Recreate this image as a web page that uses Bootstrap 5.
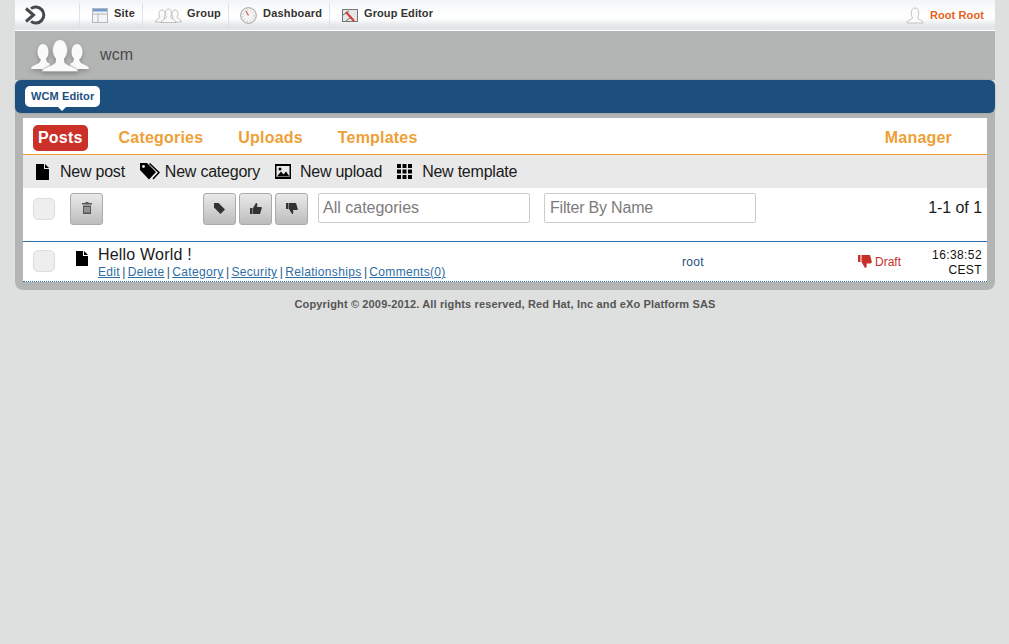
<!DOCTYPE html>
<html lang="en">
<head>
<meta charset="utf-8">
<title>WCM</title>
<link rel="stylesheet" href="https://cdn.jsdelivr.net/npm/bootstrap@5.3.0/dist/css/bootstrap.min.css">
<style>
html,body{height:100%}
body{background:#dee0df;font-family:"Liberation Sans",Arial,sans-serif;color:#000;overflow:hidden}
.shell{width:980px;margin-left:15px}
.topbar{height:31px;border-bottom:1px solid #fff;background:linear-gradient(#f2f5f7 0,#f6f8f9 5px,#fff 13px,#fff 18px,#e2e6e9 26px,#e1e5e8 30px)}
.logo-cell{width:64px;padding-left:9px;height:30px}
.tb-item{height:25px;margin-top:3px;border-left:1px solid #dfe2e4;font-size:11px;font-weight:700;color:#333;letter-spacing:.2px;white-space:nowrap}
.tb-item svg{flex:none}
.tb-label{position:relative;top:-2px}
.tb-user{color:#e2621b;font-size:11px;font-weight:700;margin-right:11px;letter-spacing:.1px}
.titlebar{height:49px;background:#b3b5b4}
.titlebar span{font-size:16px;color:#4a4a4a;margin-left:10px;letter-spacing:.1px;position:relative;top:-1px}
.groupicon{filter:drop-shadow(0 2px 2px rgba(0,0,0,.25))}
.frame{background:#b3b5b4;border-radius:6px 6px 8px 8px;padding-bottom:8px}
.bluebar{height:33px;background:#1c4f7e;border-radius:6px;padding:6px 0 0 10px;box-shadow:0 0 2px rgba(0,0,0,.25)}
.maintab{display:block;width:75px;position:relative;height:21px;line-height:21px;background:#fff;color:#1c4f7e;font-size:11px;font-weight:700;border-radius:5px;padding:0 6px;letter-spacing:.1px;white-space:nowrap}
.maintab::after{content:"";position:absolute;left:33px;bottom:-4px;border:4px solid transparent;border-bottom:0;border-top-color:#fff}
.inner{margin:5px 8px 0;background:#fff}
.tabsrow{height:37px;border-bottom:1px solid #ee9f35;padding:7px 0 0 10px}
.wtab{display:block;height:26px;line-height:25px;font-size:16px;font-weight:700;color:#ee9f35;text-decoration:none;padding:0 5px;letter-spacing:.2px;border-radius:5px}
.wtab.on{background:#cb3029;color:#fff;letter-spacing:.2px}
.actions{height:33px;background:#e9e9e9;padding-left:13px;font-size:16px;color:#1a1a1a;letter-spacing:-.23px}
.act{display:flex;align-items:center;white-space:nowrap}
.filters{height:54px;padding:5px 5px 0 10px;border-bottom:1px solid #2a6eb0}
.chk{width:22px;height:22px;background:#eee;border:1px solid #ddd;border-radius:5px;flex:none}
.gbtn{width:33px;height:32px;border:1px solid #aaa;border-radius:3px;background:linear-gradient(#e9e9e9,#bcbcbc);display:flex;align-items:center;justify-content:center;padding:0 0 2px;flex:none}
.fld{width:212px;height:30px;border:1px solid #ccc;border-radius:2px;font-size:16px;color:#7c7c7c;padding:0 4px;line-height:27px;white-space:nowrap;background:#fff}
.fld.byname{padding-left:5px;letter-spacing:-.2px}
.pager{font-size:16px;color:#1a1a1a;margin-top:3px;margin-left:auto;letter-spacing:-.05px}
.itemrow{height:40px;padding-left:10px;border-bottom:1px dotted #2a6eb0}
.ttl{font-size:16px;line-height:19px;color:#1a1a1a;letter-spacing:.2px;padding-top:3px}
.lnks{font-size:12px;line-height:15px;color:#1c4f7e;white-space:nowrap;margin-top:1px;word-spacing:-1px}
.lnks a{color:#2e6da4;letter-spacing:.33px}
.owner{width:176px;font-size:12px;color:#1c4f7e;letter-spacing:.3px;padding-top:11px;flex:none}
.state{width:72px;font-size:12px;color:#c9302c;padding-top:11px;flex:none}
.state svg{margin-right:3px;vertical-align:-2px}
.when{font-size:12px;line-height:15px;text-align:right;width:57px;padding:6px 5px 0 0;letter-spacing:.4px;flex:none;color:#111}
.copy{font-size:11px;font-weight:700;color:#555;text-align:center;margin-top:6px;letter-spacing:.145px}
</style>
</head>
<body>
<div class="shell">
  <div class="topbar d-flex">
    <div class="logo-cell d-flex align-items-center">
      <svg width="22" height="22" viewBox="0 0 22 22"><path d="M7 4.600A8 8 0 1 1 7 17.400" fill="none" stroke="#45494c" stroke-width="3"/><path d="M2 4.500L9.500 11 2 17.500" fill="none" stroke="#45494c" stroke-width="3"/></svg>
    </div>
    <div class="tb-item d-flex align-items-center" style="width:63px;padding-left:12px;gap:6px">
      <svg width="16" height="15" viewBox="0 0 16 15"><rect x=".5" y=".5" width="15" height="14" fill="#f2f4f5" stroke="#b5b8ba"/><rect x="1" y="1" width="14" height="2.500" fill="#6f9bd0"/><path d="M1 6h14M6 6v8" stroke="#b5b8ba" fill="none"/></svg><span class="tb-label">Site</span>
    </div>
    <div class="tb-item d-flex align-items-center" style="width:86px;padding-left:12px;gap:5px">
      <svg width="27" height="15" viewBox="0 0 27 15"><g fill="#fafafa" stroke="#aeb1b3" stroke-width=".8"><path d="M0.500 14c0-3 4-3 4.500-5-2-3-1-7 2-7s4 4 2 7l2 5z"/><path d="M26.500 14c0-3-4-3-4.500-5 2-3 1-7-2-7s-4 4-2 7l-2 5z"/><path d="M6 14.500c0-3 5-3 5.500-5.500-2-3-1-8 2-8s4 5 2 8c.5 2.500 5.500 2.500 5.500 5.500z"/></g></svg><span class="tb-label">Group</span>
    </div>
    <div class="tb-item d-flex align-items-center" style="width:101px;padding-left:11px;gap:6px">
      <svg width="17" height="17" viewBox="0 0 17 17"><circle cx="8.500" cy="8.500" r="7.800" fill="#f5f5f5" stroke="#9b9b9b"/><circle cx="8.500" cy="8.500" r="5.500" fill="none" stroke="#b9b9b9" stroke-dasharray="1 2"/><path d="M8.500 8.500L6 4" stroke="#d9534f" stroke-width="1.200"/></svg><span class="tb-label">Dashboard</span>
    </div>
    <div class="tb-item d-flex align-items-center" style="padding-left:12px;gap:6px;letter-spacing:.1px">
      <svg width="16" height="13" viewBox="0 0 16 13"><rect x=".5" y=".5" width="15" height="12" fill="#e4e6e7" stroke="#777"/><path d="M1 6l6-4M4 12l5-4" stroke="#666"/><path d="M4 3l8 9" stroke="#d43a32" stroke-width="2"/></svg><span class="tb-label">Group Editor</span>
    </div>
    <div class="ms-auto d-flex align-items-center tb-user" style="gap:6px">
      <svg width="18" height="17" viewBox="0 0 18 17"><path d="M1 16c0-3 5-3 5.500-5C4.500 8 4.500 1 9 1s4.500 7 2.500 10c.5 2 5.500 2 5.500 5z" fill="#fbfbfb" stroke="#b9bcbe" stroke-width=".9"/></svg><span>Root Root</span>
    </div>
  </div>
  <div class="titlebar d-flex align-items-center" style="padding-left:15px">
    <svg class="groupicon" width="60" height="36" viewBox="0 0 60 36"><g fill="#fafafa"><ellipse cx="13" cy="14" rx="5.500" ry="8"/><path d="M1 31c0-4 7-4 9-7l1-3h5l1 3 3 2-3 5z"/><ellipse cx="47" cy="14" rx="5.500" ry="8"/><path d="M59 31c0-4-7-4-9-7l-1-3h-5l-1 3-3 2 3 5z"/><g stroke="#b3b5b4" stroke-width="1"><ellipse cx="30" cy="12" rx="7.500" ry="10.500"/><path d="M12 33.500c0-5 10-5 13.500-9l1-4h7l1 4c3.500 4 13.500 4 13.500 9z"/></g><path d="M26 19h8v6h-8z"/></g></svg>
    <span>wcm</span>
  </div>
  <div class="frame">
    <div class="bluebar"><span class="maintab">WCM Editor</span></div>
    <div class="inner">
      <div class="tabsrow d-flex">
        <a class="wtab on" href="#">Posts</a>
        <a class="wtab" href="#" style="margin-left:26px">Categories</a>
        <a class="wtab" href="#" style="margin-left:25px">Uploads</a>
        <a class="wtab" href="#" style="margin-left:25px">Templates</a>
        <a class="wtab" href="#" style="margin-left:auto;margin-right:30px">Manager</a>
      </div>
      <div class="actions d-flex align-items-center">
        <div class="act" style="gap:11px"><svg width="13" height="16" viewBox="0 0 13 16"><path d="M0 0h8v5h5v11H0zM9 0l4 4H9z" fill="#000"/></svg>New post</div>
        <div class="act" style="gap:5px;margin-left:15px"><svg width="20" height="17" viewBox="0 0 20 17"><path d="M0 0h7l9 9-7 7.500L0 7z" fill="#000"/><path d="M9.500 0.500l9.500 9-6 6.500" fill="none" stroke="#000" stroke-width="1.500"/><circle cx="3.500" cy="3.500" r="1.400" fill="#e9e9e9"/></svg>New category</div>
        <div class="act" style="gap:9px;margin-left:15px"><svg width="16" height="15" viewBox="0 0 16 15"><path fill-rule="evenodd" d="M0 0h16v15H0zM1.500 2v11h13V2z" fill="#000"/><path d="M2 12.500l4-5 2.500 3 2.500-3 3.500 5z" fill="#000"/><circle cx="5" cy="5" r="1.500" fill="#000"/></svg>New upload</div>
        <div class="act" style="gap:10px;margin-left:15px"><svg width="15" height="15" viewBox="0 0 15 15" fill="#000"><rect width="4" height="4"/><rect x="5.500" width="4" height="4"/><rect x="11" width="4" height="4"/><rect y="5.500" width="4" height="4"/><rect x="5.500" y="5.500" width="4" height="4"/><rect x="11" y="5.500" width="4" height="4"/><rect y="11" width="4" height="4"/><rect x="5.500" y="11" width="4" height="4"/><rect x="11" y="11" width="4" height="4"/></svg>New template</div>
      </div>
      <div class="filters d-flex align-items-start">
        <div class="chk" style="margin-top:5px"></div>
        <button class="gbtn" type="button" style="margin-left:15px" aria-label="Delete"><svg width="10" height="12" viewBox="0 0 10 12" fill="#555"><path d="M3.500 0h3v1H10v1.500H0V1h3.500zM1 3.500h8V12H1zM2.500 5v5.500h1V5zM4.500 5v5.500h1V5zM6.500 5v5.500h1V5z" fill-rule="evenodd"/></svg></button>
        <button class="gbtn" type="button" style="margin-left:100px" aria-label="Category"><svg width="11" height="11" viewBox="0 0 11 11"><path d="M0 0h4.500L11 6.500 6.500 11 0 4.500z" fill="#333"/></svg></button>
        <button class="gbtn" type="button" style="margin-left:3px" aria-label="Publish"><svg width="12" height="11" viewBox="0 0 12 11" fill="#333"><path d="M0 5h2.500v6H0zM3 5l3-5c1.500 0 1.500 1.500 1 4h4c1 0 1 1 .5 2L10 11H3z"/></svg></button>
        <button class="gbtn" type="button" style="margin-left:3px" aria-label="Draft"><svg width="12" height="11" viewBox="0 0 12 11" fill="#333"><path d="M0 0h2.500v6H0zM3 6l3 5c1.500 0 1.500-1.500 1-4h4c1 0 1-1 .5-2L10 0H3z"/></svg></button>
        <div class="fld" style="margin-left:10px">All categories</div>
        <div class="fld byname" style="margin-left:14px">Filter By Name</div>
        <div class="pager">1-1 of 1</div>
      </div>
      <div class="itemrow d-flex">
        <div class="chk" style="margin-top:8px"></div>
        <svg width="12" height="15" viewBox="0 0 12 15" style="margin:9px 0 0 21px;flex:none"><path d="M0 0h7v5h5v10H0zM8 0l4 4H8z" fill="#000"/></svg>
        <div style="width:584px;margin-left:10px;flex:none">
          <div class="ttl">Hello World !</div>
          <div class="lnks"><a href="#">Edit</a> | <a href="#">Delete</a> | <a href="#">Category</a> | <a href="#">Security</a> | <a href="#">Relationships</a> | <a href="#">Comments(0)</a></div>
        </div>
        <div class="owner">root</div>
        <div class="state"><svg width="14" height="13" viewBox="0 0 14 13" fill="#c9302c"><path d="M0 0h2.500v7H0zM3.500 7l3.500 6c1.500 0 2-1.500 1.500-4.500H12c2 0 2-2 1.500-3L12 0H3.500z"/></svg>Draft</div>
        <div class="when">16:38:52<br>CEST</div>
      </div>
    </div>
  </div>
  <div class="copy">Copyright © 2009-2012. All rights reserved, Red Hat, Inc and eXo Platform SAS</div>
</div>
</body>
</html>
